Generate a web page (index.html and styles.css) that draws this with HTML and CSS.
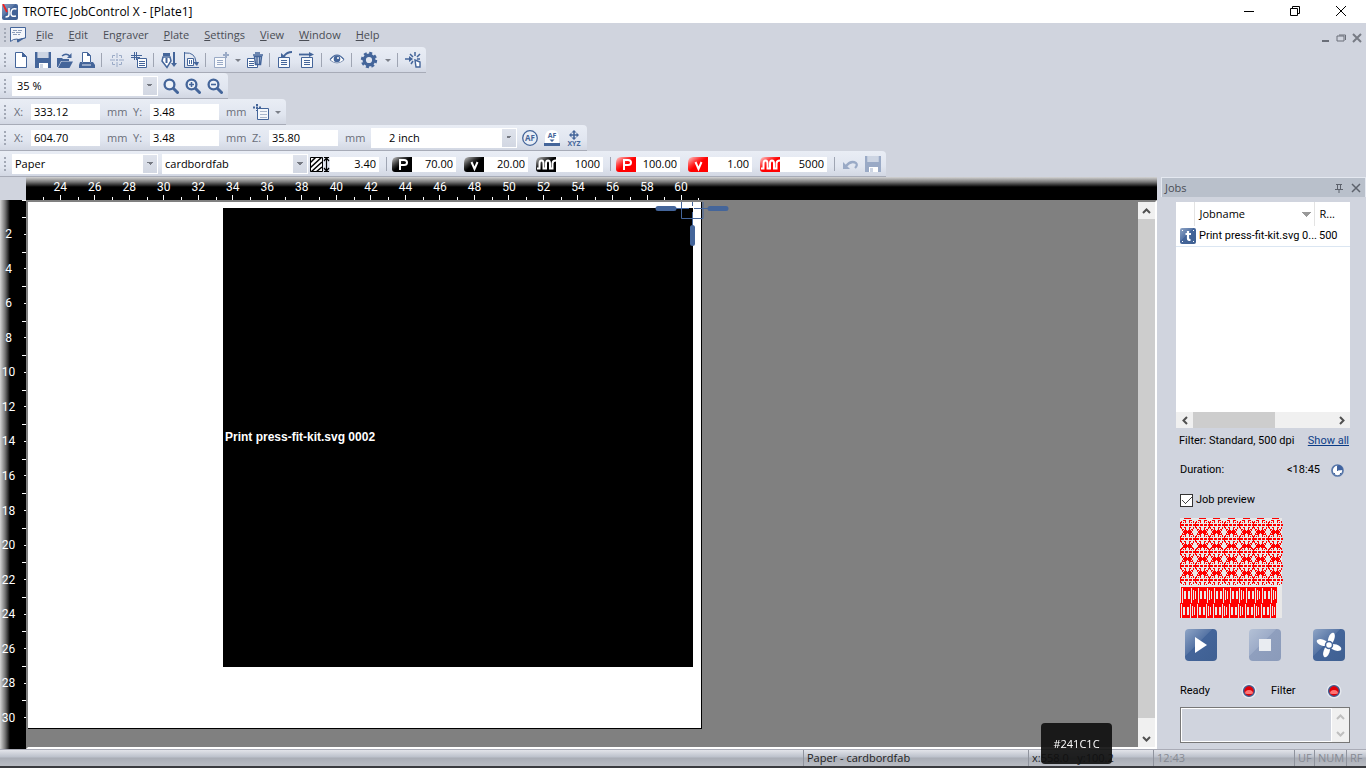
FILE: index.html
```html
<!DOCTYPE html>
<html lang="en">
<head>
<meta charset="utf-8">
<title>TROTEC JobControl X - [Plate1]</title>
<link rel="stylesheet" href="styles.css">
</head>
<body>
<svg class="defs" width="0" height="0" aria-hidden="true">
  <defs>
    <linearGradient id="blue" x1="0" y1="0" x2="1" y2="1"><stop offset="0" stop-color="#8fa5c6"/><stop offset=".42" stop-color="#5775a5"/><stop offset=".43" stop-color="#44659a"/><stop offset="1" stop-color="#3f6092"/></linearGradient>
    <linearGradient id="pale" x1="0" y1="0" x2="1" y2="1"><stop offset="0" stop-color="#b4c1d6"/><stop offset=".42" stop-color="#9dacc8"/><stop offset=".43" stop-color="#8f9fbe"/><stop offset="1" stop-color="#8b9bba"/></linearGradient>
    <linearGradient id="black" x1="0" y1="0" x2="1" y2="1"><stop offset="0" stop-color="#c8c8c8"/><stop offset=".35" stop-color="#303030"/><stop offset=".5" stop-color="#000"/></linearGradient>
    <linearGradient id="red" x1="0" y1="0" x2="1" y2="1"><stop offset="0" stop-color="#ffd0d0"/><stop offset=".35" stop-color="#ff3030"/><stop offset=".5" stop-color="#f00"/></linearGradient>
    <symbol id="save" viewBox="0 0 16 16"><path fill="currentColor" d="M0 0h2.500v6h11V0H16v16H0z"/><path fill="#cdd5e3" d="M3 0h10v6H3z"/><path fill="#fff" d="M4 11h9v5H4z"/><path fill="#cdd5e3" d="M5 12h3v4H5z"/></symbol>
    <symbol id="sheet" viewBox="0 0 16 16"><path fill="#f7f9fc" stroke="currentColor" d="M1.500 5.500h11v10h-11z"/><path stroke="currentColor" d="M4 8.500h6M4 10.500h6M4 12.500h6"/></symbol>
    <symbol id="lens" viewBox="0 0 16 16"><circle cx="6.500" cy="6.500" r="4.900" fill="#eef2f8" stroke="currentColor" stroke-width="2.300"/><path d="M10.500 10.500l4 4" stroke="currentColor" stroke-width="3" stroke-linecap="round"/></symbol>
    <symbol id="wave" viewBox="0 0 20 15"><path fill="none" stroke="#fff" stroke-width="2" d="M1 11.500h2.500v-5q0-3 2-3t2 3v5H10v-5q0-3 2-3t2 3v5h2.500v-5q0-3 3.500-3"/></symbol>
    <symbol id="badge" viewBox="0 0 20 15"><path fill="inherit" d="M5 0h15v15H3q-3 0-3-3V6q0-6 5-6z"/></symbol>
    <symbol id="lamp" viewBox="0 0 16 16"><circle cx="8" cy="8" r="7.500" fill="#e5e8ee"/><circle cx="8" cy="8" r="5.400" fill="#e00008" stroke="#3e5e94" stroke-width="1.400"/><path d="M4 10.500q0-3.500 4-3.500t4 3.500q-4 1.200-8 0z" fill="#ff7474"/></symbol>
    <g id="hexline" fill="#f00" shape-rendering="crispEdges"><path d="M0 6h4v2H0zM5 6h3v2H5zM9 6h3v2H9zM13 6h2v2h-2zM0 4h1v6H0z"/><path d="M3 2h3v1H3zM9 2h3v1H9zM5 3h1v2H5zM9 3h1v2H9zM3 4h1v1H3zM11 4h1v1h-1zM4 9h2v1H4zM9 9h2v1H9zM5 10h1v2H5zM9 10h1v2H9zM3 11h1v1H3zM11 11h1v1h-1zM1 3h1v2H1zM13 3h1v2h-1zM1 9h1v2H1zM13 9h1v2h-1z"/></g>
    <g id="hexnode" fill="#f00" shape-rendering="crispEdges"><path d="M3-1h9v2H3zM4-2h3v4H4zM8-2h3v4H8zM2-3h1v2H2zM12-3h1v2h-1zM2 1h1v2H2zM12 1h1v2h-1z"/></g>
    <g id="linerow"><use href="#hexline"/><use href="#hexline" x="15"/><use href="#hexline" x="29"/><use href="#hexline" x="44"/><use href="#hexline" x="59"/><use href="#hexline" x="73"/><use href="#hexline" x="88"/></g>
    <g id="noderow"><use href="#hexnode"/><use href="#hexnode" x="15"/><use href="#hexnode" x="29"/><use href="#hexnode" x="44"/><use href="#hexnode" x="59"/><use href="#hexnode" x="73"/><use href="#hexnode" x="88"/></g>
    <pattern id="bars" width="16" height="16" patternUnits="userSpaceOnUse">
      <path fill="#f00" d="M0 0h16v16H0z"/>
      <path fill="#e8e8e8" d="M1 1h1v15H1zM3 4h2v8H3zM7 4h2v8H7zM10 1h1v15h-1zM12 3h1v10h-1zM14 4h1v8h-1z"/>
    </pattern>
  </defs>
</svg>

<header class="titlebar">
  <svg class="logo" viewBox="0 0 16 16" width="16" height="16"><rect width="16" height="16" rx="2" fill="url(#blue)"/><path d="M7 4v6.500q0 2.500-3.500 2.500M14.500 5q-5-1.500-5.500 3.500t5 3.500" fill="none" stroke="#fff" stroke-width="1.500"/><path d="M1 0l4 8" stroke="#f02020" stroke-width="1.800"/></svg>
  <h1>TROTEC JobControl X - [Plate1]</h1>
  <div class="winbuttons">
    <button aria-label="Minimize"><svg width="12" height="12" viewBox="0 0 12 12"><path d="M1 6.500h10" stroke="#000"/></svg></button>
    <button aria-label="Restore"><svg width="12" height="12" viewBox="0 0 12 12"><path d="M1.500 3.500h7v7h-7zM3.500 3V1.500h7v7H9" fill="none" stroke="#000"/></svg></button>
    <button aria-label="Close"><svg width="12" height="12" viewBox="0 0 12 12"><path d="M1 1l10 10M11 1L1 11" stroke="#000"/></svg></button>
  </div>
</header>

<nav class="menubar" aria-label="Menu">
  <i class="grip"></i>
  <svg class="doc" viewBox="0 0 16 16" width="16" height="16"><path fill="#f4f6fa" stroke="#44659a" d="M.5.500h15V11l-4.500 1-3.500 3v-3l-4 .5-3 2z"/><path d="M8 15.500V12l7.500-1.500z" fill="#44659a"/><path d="M3 3.500h4M8 3.500h4M2 5.500h3M6 5.500h5M3 7.500h4M8 7.500h2" stroke="#8c9dba"/></svg>
  <button><u>F</u>ile</button><button><u>E</u>dit</button><button>En<u>g</u>raver</button><button><u>P</u>late</button><button><u>S</u>ettings</button><button><u>V</u>iew</button><button><u>W</u>indow</button><button><u>H</u>elp</button>
  <div class="mdibuttons">
    <button aria-label="Minimize plate"><svg width="10" height="10" viewBox="0 0 10 10"><path d="M2 8h7" stroke="#6a6e78" stroke-width="2"/></svg></button>
    <button aria-label="Restore plate"><svg width="10" height="10" viewBox="0 0 10 10"><path d="M1 3h7v5H1zM3 2h6.500v5" fill="none" stroke="#6a6e78"/></svg></button>
    <button aria-label="Close plate"><svg width="10" height="10" viewBox="0 0 10 10"><path d="M1 1l8 8M9 1L1 9" stroke="#777b84" stroke-width="2"/></svg></button>
  </div>
</nav>

<section class="toolbars">
  <div class="toolbar" role="toolbar" aria-label="Standard">
    <i class="grip"></i>
    <button class="tool" aria-label="New"><svg viewBox="0 0 16 16"><path fill="#fff" stroke="currentColor" d="M2.500.5h7l4 4v11h-11z"/><path d="M9 0v5h5z" fill="currentColor"/></svg></button>
    <button class="tool" aria-label="Save"><svg><use href="#save"/></svg></button>
    <button class="tool" aria-label="Open"><svg viewBox="0 0 16 16"><path fill="currentColor" d="M0 6h5l1 1h6v2H4l-3 6H0z"/><path fill="currentColor" d="M4.500 9.500H16L12.500 16H1z"/><path d="M5 4q4-3.500 8 0" fill="none" stroke="currentColor" stroke-width="1.500"/><path d="M14.500 1v5H10z" fill="currentColor"/></svg></button>
    <button class="tool" aria-label="Print"><svg viewBox="0 0 16 16"><path fill="#fff" stroke="currentColor" d="M3.500.5h5l3 3v7h-8z"/><path fill="currentColor" d="M8 0v4h4zM1 10h2v1h9v-1h2l2 3v3H0v-3z"/><path stroke="#e6ebf4" d="M3 13h9"/></svg></button>
    <i class="sep"></i>
    <button class="tool faded" aria-label="Position"><svg viewBox="0 0 16 16"><path fill="none" stroke="currentColor" d="M3.500 6V3.500H6M10 3.500h2.500V6M12.500 10v2.500H10M6 12.500H3.500V10M8 1v5M8 10v5M1 8h5M10 8h5M7 8h2M8 7v2"/></svg></button>
    <button class="tool" aria-label="Position job"><svg viewBox="0 0 16 16"><path stroke="currentColor" d="M3.500 0v8M5.500 0v8M0 3.500h11M0 5.500h9"/><path fill="#fff" stroke="currentColor" d="M6.500 6.500h9v9h-9z"/><path stroke="currentColor" d="M8 9.500h6M8 11.500h6M8 13.500h6"/></svg></button>
    <i class="sep"></i>
    <button class="tool" aria-label="Vector order"><svg viewBox="0 0 16 16"><path fill="currentColor" d="M2 1h7v3H2z"/><path fill="#fff" stroke="currentColor" stroke-width="1.500" d="M2 5h7l1 4-4 6.500L1 9z"/><path d="M5.500 6v5" stroke="currentColor" stroke-width="2"/><path d="M13 0v12" stroke="currentColor" stroke-width="2"/><path d="M10 11h6l-3 4z" fill="currentColor"/></svg></button>
    <button class="tool" aria-label="Rotate"><svg viewBox="0 0 16 16"><path fill="none" stroke="currentColor" d="M1.500 0v15.500H16M2 1q10-1 11 9"/><path fill="#fff" stroke="currentColor" d="M4.500 6.500h6v7h-6z"/><path d="M6.500 8v4M8.500 8v4" stroke="currentColor"/><path d="M10 10h6l-2 4z" fill="currentColor"/></svg></button>
    <i class="sep"></i>
    <button class="tool faded" aria-label="Add job"><svg viewBox="0 0 16 16"><use href="#sheet" width="16" height="16"/><path d="M13 0v6M10 3h6" stroke="currentColor" stroke-width="2"/></svg></button>
    <button class="drop" aria-label="Add options"></button>
    <button class="tool" aria-label="Delete job"><svg viewBox="0 0 16 16"><path fill="#fff" stroke="currentColor" d="M.5 6.500h10v9H.5z"/><path d="M2 9.500h5M2 11.500h5M2 13.500h5" stroke="currentColor"/><path fill="#e6ebf4" stroke="currentColor" stroke-width="1.500" d="M7.500 4.500h7l-1 8h-5z"/><path d="M6 3h10M8 1h5M10 5v7M12.500 5v7" stroke="currentColor" stroke-width="1.500"/></svg></button>
    <i class="sep"></i>
    <button class="tool" aria-label="Undo"><svg viewBox="0 0 16 16"><use href="#sheet" width="16" height="16"/><path d="M15 0q-5 0-8 4" fill="none" stroke="currentColor" stroke-width="1.800"/><path d="M4 1v5h6z" fill="currentColor"/></svg></button>
    <button class="tool" aria-label="Move job"><svg viewBox="0 0 16 16"><use href="#sheet" x="1" width="16" height="16"/><path d="M0 2.500h12" stroke="currentColor" stroke-width="1.800"/><path d="M10 0l5 2.500L10 5z" fill="currentColor"/></svg></button>
    <i class="sep"></i>
    <button class="tool" aria-label="Preview"><svg viewBox="0 0 16 16"><path d="M1 8q7-9 14 0-7 6-14 0z" fill="#fff" stroke="#8799b8"/><path d="M1 7.500q7-9 14 0" fill="none" stroke="currentColor" stroke-width="1.200"/><circle cx="8" cy="7" r="3.300" fill="currentColor"/><circle cx="9" cy="6" r="1" fill="#fff"/></svg></button>
    <i class="sep"></i>
    <button class="tool gear" aria-label="Options"><svg viewBox="0 0 16 16"><circle cx="8" cy="8" r="4.800" fill="none" stroke="currentColor" stroke-width="3.400"/><circle cx="8" cy="8" r="7" fill="none" stroke="currentColor" stroke-width="2.400" stroke-dasharray="3 2.500"/></svg></button>
    <button class="drop" aria-label="Option list"></button>
    <i class="sep"></i>
    <button class="tool" aria-label="Connect laser"><svg viewBox="0 0 16 16"><path d="M0 7h6M10 0v4M5 2l3 3M15 2l-3 3M15 7h-3M6 12l2-3" stroke="currentColor" stroke-width="1.500"/><path d="M4 4l4 3-4 3z" fill="currentColor"/><path d="M10 8l5 2v5h-4z" fill="#fff" stroke="currentColor" stroke-width="1.400"/></svg></button>
  </div>

  <div class="toolbar" role="toolbar" aria-label="Zoom">
    <i class="grip"></i>
    <select class="combo" aria-label="Zoom level"><option>35 %</option></select>
    <button class="tool first" aria-label="Zoom"><svg><use href="#lens"/></svg></button>
    <button class="tool" aria-label="Zoom in"><svg viewBox="0 0 16 16"><use href="#lens" width="16" height="16"/><path d="M4 6.500h5M6.500 4v5" stroke="currentColor" stroke-width="1.600"/></svg></button>
    <button class="tool" aria-label="Zoom out"><svg viewBox="0 0 16 16"><use href="#lens" width="16" height="16"/><path d="M4 6.500h5" stroke="currentColor" stroke-width="1.600"/></svg></button>
  </div>

  <div class="toolbar" role="toolbar" aria-label="Job position">
    <i class="grip"></i>
    <label class="axis"><span>X:</span><input value="333.12"><span>mm</span></label>
    <label class="axis"><span>Y:</span><input value="3.48"><span>mm</span></label>
    <button class="tool" aria-label="Anchor"><svg viewBox="0 0 16 16"><path fill="#f4f7fb" stroke="currentColor" d="M4.500 4.500h11v11h-11z"/><path d="M7 7.500h7M7 10.500h7M7 13.500h7" stroke="#a9b6cc"/><path d="M4 0v7M0 3.500h8" stroke="currentColor" stroke-width="2" stroke-dasharray="2 1"/></svg></button>
    <button class="drop" aria-label="Anchor list"></button>
  </div>

  <div class="toolbar" role="toolbar" aria-label="Laser position">
    <i class="grip"></i>
    <label class="axis"><span>X:</span><input value="604.70"><span>mm</span></label>
    <label class="axis"><span>Y:</span><input value="3.48"><span>mm</span></label>
    <label class="axis"><span>Z:</span><input value="35.80"><span>mm</span></label>
    <select class="combo lenscombo" aria-label="Lens"><option>2 inch</option></select>
    <button class="tool first" aria-label="Autofocus"><svg viewBox="0 0 16 16"><circle cx="8" cy="8" r="7.300" fill="#e9eef6" stroke="currentColor" stroke-width="1.300"/><text x="8" y="11" class="af">AF</text></svg></button>
    <button class="tool" aria-label="Focus table"><svg viewBox="0 0 16 16"><path d="M1 13V6q1-6 7-6t7 6v7z" fill="#fff"/><text x="8" y="8" class="af small">AF</text><path d="M5.500 9.500h5L8 12zM0 13h16v3H0z" fill="currentColor"/></svg></button>
    <button class="tool" aria-label="Move axes"><svg viewBox="0 0 16 16"><path d="M8 1v8M4 5h8" stroke="currentColor" stroke-width="1.600"/><path d="M8 0l2.500 2.500h-5zM8 10L5.500 7.500h5zM3 5l2.500-2.500v5zM13 5l-2.500-2.500v5z" fill="currentColor"/><text x="8" y="16" class="af small">XYZ</text></svg></button>
  </div>

  <div class="toolbar" role="toolbar" aria-label="Material">
    <i class="grip"></i>
    <select class="combo material" aria-label="Material group"><option>Paper</option></select>
    <select class="combo material" aria-label="Material"><option>cardbordfab</option></select>
    <label class="param"><svg viewBox="0 0 20 15" aria-label="Thickness"><path fill="#fff" stroke="#000" d="M.5.5h12v14H.5z"/><path d="M0 6l6-6M0 11L12 0M1 15L12 5M6 15l6-5" stroke="#000" stroke-width="1.500"/><path d="M14 .5h5M14 14.500h5M16.500 1v13M14 4l2.500-3L19 4M14 11l2.500 3 2.500-3" fill="none" stroke="#000" stroke-width="1.200"/></svg><input class="wide" value="3.40"></label>
    <i class="sep wide"></i>
    <label class="param"><svg viewBox="0 0 20 15" aria-label="Engrave power"><use href="#badge" fill="url(#black)"/><path d="M8 13V3h4q3 0 3 2.500T12 8H8" fill="none" stroke="#fff" stroke-width="2"/></svg><input value="70.00"></label>
    <label class="param"><svg viewBox="0 0 20 15" aria-label="Engrave speed"><use href="#badge" fill="url(#black)"/><path d="M7.500 5l3 7 3-7" fill="none" stroke="#fff" stroke-width="2"/></svg><input value="20.00"></label>
    <label class="param"><svg viewBox="0 0 20 15" aria-label="Engrave frequency"><use href="#badge" fill="url(#black)"/><use href="#wave"/></svg><input class="mid" value="1000"></label>
    <i class="sep wide"></i>
    <label class="param"><svg viewBox="0 0 20 15" aria-label="Cut power"><use href="#badge" fill="url(#red)"/><path d="M8 13V3h4q3 0 3 2.500T12 8H8" fill="none" stroke="#fff" stroke-width="2"/></svg><input value="100.00"></label>
    <label class="param"><svg viewBox="0 0 20 15" aria-label="Cut speed"><use href="#badge" fill="url(#red)"/><path d="M7.500 5l3 7 3-7" fill="none" stroke="#fff" stroke-width="2"/></svg><input value="1.00"></label>
    <label class="param"><svg viewBox="0 0 20 15" aria-label="Cut frequency"><use href="#badge" fill="url(#red)"/><use href="#wave"/></svg><input class="mid" value="5000"></label>
    <i class="sep wide"></i>
    <button class="tool faded" aria-label="Revert"><svg viewBox="0 0 16 16"><path d="M3 10q5-6 10-3 2 2-1 5" fill="none" stroke="currentColor" stroke-width="2.200"/><path d="M0 6v7h7z" fill="currentColor"/></svg></button>
    <button class="tool faded" aria-label="Save material"><svg><use href="#save"/></svg></button>
  </div>
</section>

<main class="work">
  <section class="plateview">
    <div class="hruler">
      <span>24</span><span>26</span><span>28</span><span>30</span><span>32</span><span>34</span><span>36</span><span>38</span><span>40</span><span>42</span><span>44</span><span>46</span><span>48</span><span>50</span><span>52</span><span>54</span><span>56</span><span>58</span><span>60</span>
    </div>
    <div class="vruler">
      <span>2</span><span>4</span><span>6</span><span>8</span><span>10</span><span>12</span><span>14</span><span>16</span><span>18</span><span>20</span><span>22</span><span>24</span><span>26</span><span>28</span><span>30</span>
    </div>
    <div class="canvas">
      <div class="surface">
        <div class="plate"><div class="job">Print press-fit-kit.svg 0002</div></div>
        <svg class="laserhead" width="76" height="46" viewBox="0 0 76 46"><g fill="none" stroke="#44659a"><path d="M26.500 0v16.500h21.500V0M37.500 0v4M21 6.500h13M39 6.500h14M37.500 10v13"/><path stroke-width="5" stroke-linecap="round" d="M3 6.500h16M55 6.500h16M37.500 25.500v16"/></g></svg>
      </div>
      <div class="vscroll">
        <button aria-label="Scroll up"><svg width="9" height="6" viewBox="0 0 9 6"><path d="M1 5l3.500-3.500L8 5" fill="none" stroke="#505050" stroke-width="2"/></svg></button>
        <i class="thumb"></i>
        <button aria-label="Scroll down"><svg width="9" height="6" viewBox="0 0 9 6"><path d="M1 1l3.500 3.500L8 1" fill="none" stroke="#505050" stroke-width="2"/></svg></button>
      </div>
    </div>
  </section>

  <aside class="jobs">
    <header><h2>Jobs</h2>
      <button aria-label="Pin"><svg width="10" height="10" viewBox="0 0 10 10"><path d="M2 1.500h6M3.500 1.500v5M6.500 1.500v5M1 6.500h8M5 7v3" fill="none" stroke="#5d626c"/></svg></button>
      <button aria-label="Close jobs"><svg width="10" height="10" viewBox="0 0 10 10"><path d="M1 1l8 8M9 1L1 9" stroke="#5d626c" stroke-width="1.500"/></svg></button>
    </header>
    <div class="jobsbody">
      <div class="list">
        <table>
          <thead><tr><th class="c-icon"></th><th class="c-name">Jobname</th><th>R...</th></tr></thead>
          <tbody><tr><td><svg width="16" height="16" viewBox="0 0 16 16"><rect width="16" height="16" rx="2" fill="url(#blue)"/><path d="M8 3v7.500q0 1.500 2.500 1.500M5.500 6H11" fill="none" stroke="#fff" stroke-width="2.200"/><path d="M2 2h1v1H2zM13 2h1v1h-1zM2 13h1v1H2zM13 13h1v1h-1z" fill="#fff"/></svg></td><td>Print press-fit-kit.svg 0...</td><td>500</td></tr></tbody>
        </table>
        <div class="hscroll">
          <button aria-label="Scroll left"><svg width="6" height="9" viewBox="0 0 6 9"><path d="M5 1L1.500 4.500 5 8" fill="none" stroke="#505050" stroke-width="2"/></svg></button>
          <i class="thumb"></i>
          <button aria-label="Scroll right"><svg width="6" height="9" viewBox="0 0 6 9"><path d="M1 1l3.500 3.500L1 8" fill="none" stroke="#505050" stroke-width="2"/></svg></button>
        </div>
      </div>
      <div class="row filterrow"><span>Filter: Standard, 500 dpi</span><a href="#">Show all</a></div>
      <div class="row duration"><span>Duration:</span><span class="time">&lt;18:45</span><button aria-label="Calculate duration"><svg width="13" height="13" viewBox="0 0 13 13"><circle cx="6.500" cy="6.500" r="5.500" fill="#fff" stroke="#5877a9" stroke-width="1.700"/><path d="M6.500 6.500V1q5 0 5.500 5z" fill="#3f62a0"/><path d="M6 2h1v5H6zM3 9h1v1H3zM9 9h1v1H9z" fill="#44659a"/></svg></button></div>
      <label class="row check"><input type="checkbox" checked>Job preview</label>
      <svg class="preview" width="103" height="100" viewBox="0 0 103 100"><rect width="102" height="100" fill="#e8e8e8"/>
        <path d="M4 .5h7M19 .5h7M33 .5h7M48 .5h7M63 .5h7M77 .5h7M92 .5h7" stroke="#f00" shape-rendering="crispEdges"/>
        <use href="#linerow"/><use href="#linerow" y="14"/><use href="#linerow" y="27"/><use href="#linerow" y="41"/><use href="#linerow" y="55"/>
        <use href="#noderow" y="14"/><use href="#noderow" y="28"/><use href="#noderow" y="41"/><use href="#noderow" y="55"/>
        <g transform="translate(1 69)"><rect width="96" height="16" fill="url(#bars)"/></g><g transform="translate(0 85)"><rect width="96" height="15" fill="url(#bars)"/></g></svg>
      <div class="actions">
        <button aria-label="Start"><svg width="32" height="32" viewBox="0 0 32 32"><rect width="32" height="32" rx="4" fill="url(#blue)"/><path d="M10 8l12 8-12 8z" fill="#fff"/></svg></button>
        <button aria-label="Stop"><svg width="32" height="32" viewBox="0 0 32 32"><rect width="32" height="32" rx="4" fill="url(#pale)"/><path d="M10 10h12v12H10z" fill="#e9ecf1"/></svg></button>
        <button aria-label="Exhaust"><svg width="32" height="32" viewBox="0 0 32 32"><rect width="32" height="32" rx="4" fill="url(#blue)"/><g fill="#fff" transform="rotate(20 16 16)"><ellipse cx="16" cy="9" rx="3" ry="6"/><ellipse cx="16" cy="23" rx="3" ry="6"/><ellipse cx="9" cy="16" rx="6" ry="3"/><ellipse cx="23" cy="16" rx="6" ry="3"/></g><circle cx="16" cy="16" r="3.500" fill="#fff" stroke="#44659a" stroke-width="1.500"/></svg></button>
      </div>
      <div class="row lamps"><span>Ready</span><svg width="16" height="16"><use href="#lamp"/></svg><span>Filter</span><svg width="16" height="16"><use href="#lamp"/></svg></div>
      <div class="messages"><textarea aria-label="Messages" readonly></textarea>
        <div class="spin"><svg width="9" height="6" viewBox="0 0 9 6"><path d="M1 5l3.500-3.500L8 5" fill="none" stroke="#bfbfbf" stroke-width="2"/></svg><svg width="9" height="6" viewBox="0 0 9 6"><path d="M1 1l3.500 3.500L8 1" fill="none" stroke="#bfbfbf" stroke-width="2"/></svg></div>
      </div>
    </div>
  </aside>
</main>

<footer class="status">
  <span class="s-material">Paper - cardbordfab</span>
  <span class="s-pos">x:558.0 &nbsp; y:100.2</span>
  <span class="s-time dim">12:43</span>
  <span class="s-uf dim">UF</span><span class="s-num dim">NUM</span><span class="s-rf dim">RF</span>
</footer>
<div class="tip" role="tooltip">#241C1C</div>
</body>
</html>
```

FILE: styles.css
```css
* { box-sizing: border-box; }
body {
  margin: 0;
  height: 100vh;
  display: flex;
  flex-direction: column;
  overflow: hidden;
  background: #d0d4de;
  color: #000;
  font: 11px/16px "Open Sans", sans-serif;
}
button, input, select, textarea { font: inherit; color: inherit; margin: 0; padding: 0; border: 0; border-radius: 0; outline: 0; }
button { background: none; }
h1, h2 { margin: 0; font-weight: 400; }
svg { display: block; }
.defs { position: absolute; }

.titlebar { display: flex; align-items: center; height: 23px; padding-left: 2px; background: #fff; }
.titlebar h1 { margin-left: 5px; font-size: 12px; }
.winbuttons { margin-left: auto; display: flex; padding: 0 2px 2px 0; }
.winbuttons button { width: 46px; display: grid; place-items: center; }

.menubar { display: flex; align-items: center; height: 24px; padding-left: 4px; color: #4a4d55; }
.grip { width: 8px; height: 14px; flex: none; background: repeating-linear-gradient(#a2a8b5 0 2px, transparent 2px 4px) no-repeat 0 0 / 2px 14px; }
.doc { margin: 0 10px 0 -2px; }
.menubar > button { margin-right: 15px; }
.mdibuttons { margin-left: auto; display: flex; gap: 6px; padding: 6px 4px 0 0; }

.toolbars { display: flex; flex-direction: column; align-items: flex-start; }
.toolbar {
  display: flex;
  align-items: center;
  height: 26px;
  padding: 1px 2px 0 4px;
  border-bottom: 1px solid #a7abb7;
  border-radius: 0 4px 0 0;
  background: linear-gradient(#e9edf5, #e1e6f0 60%, #d2d7e3);
}
.tool { width: 22px; height: 22px; display: grid; place-items: center; color: #44659a; }
.tool svg { width: 16px; height: 16px; overflow: visible; }
.tool.faded { color: #9aaac6; }
.tool.gear { width: 26px; }
.tool.first { margin-left: 2px; }
.grip + .tool, .axis + .tool { margin-left: -2px; }
.drop { width: 12px; height: 22px; display: grid; place-items: center; }
.drop::before { content: ""; border: 3px solid transparent; border-top-color: #7b7f88; border-bottom: 0; }
.sep { width: 8px; height: 14px; background: linear-gradient(#9fa5b3, #9fa5b3) no-repeat 3px 0 / 1px 14px; }
.sep.wide { width: 13px; background-position: 7px 0; }

.combo {
  appearance: none;
  width: 146px;
  height: 20px;
  padding: 0 20px 0 5px;
  background:
    linear-gradient(45deg, transparent 50%, #757982 50%) no-repeat right 8px top 8px / 3px 3px,
    linear-gradient(-45deg, transparent 50%, #757982 50%) no-repeat right 5px top 8px / 3px 3px,
    linear-gradient(#dfe3ec, #d2d7e2) no-repeat right 1px top 1px / 14px 18px,
    #fff;
}
.combo.material { margin-right: 4px; padding-left: 3px; }
.combo.material + .param { margin-left: -2px; }
.lenscombo { padding-left: 18px; }
.axis { display: flex; align-items: center; color: #6a6e79; }
.axis input { width: 69px; height: 16px; padding-left: 3px; background: #fff; color: #000; margin-right: 7px; }
.axis span:first-child { width: 17px; }
.axis span:last-child { width: 26px; }
.toolbar .grip + .axis { padding-left: 2px; }
.param { display: flex; margin-right: 8px; }
.param svg { width: 20px; height: 15px; }
.param input { width: 44px; height: 15px; padding-right: 3px; text-align: right; background: #fff; }
.param input.mid { width: 47px; }
.param input.wide { width: 49px; }
.param:has(+ .sep) { margin-right: 0; }
.af { font: 700 8px "Open Sans", sans-serif; fill: currentColor; text-anchor: middle; }
.af.small { font-size: 7px; }

.work { flex: 1; min-height: 0; display: flex; }
.plateview {
  flex: 1;
  min-width: 0;
  display: grid;
  grid-template: 23px 1fr / 26px 1fr;
  color: #fff;
  font-family: Roboto, sans-serif;
  font-size: 12px;
}
.hruler {
  grid-column: 2;
  display: flex;
  padding: 3px 0 0 17px;
  background: linear-gradient(#d4d4d4, #777 5px, #000 10px);
}
.hruler span {
  flex: 0 0 auto;
  width: calc(656px / 19);
  text-align: center;
  line-height: 14px;
  background:
    linear-gradient(#fff, #fff) no-repeat 50% 100% / 1px 5px,
    linear-gradient(#fff, #fff) no-repeat 0 100% / 1px 3px;
}
.hruler span:last-child { border-right: 1px solid; border-image: linear-gradient(transparent 17px, #fff 17px) 1; }
.vruler {
  display: flex;
  flex-direction: column;
  padding-top: 17px;
  background:
    linear-gradient(#fff, #fff) no-repeat right top / 4px 1px,
    linear-gradient(90deg, #d4d4d4, #777 5px, #000 10px);
}
.vruler span {
  height: calc(518px / 15);
  display: flex;
  align-items: center;
  justify-content: center;
  padding-right: 9px;
  background:
    linear-gradient(#fff, #fff) no-repeat 100% 50% / 2px 1px,
    linear-gradient(#fff, #fff) no-repeat 100% 0 / 4px 1px;
}
.canvas {
  display: flex;
  min-height: 0;
  border: 2px solid;
  border-color: #808080 #fff #fff #808080;
}
.surface { flex: 1; position: relative; overflow: hidden; background: #808080; }
.plate { position: relative; width: 674px; height: 527px; background: #fff; border: solid #000; border-width: 0 1px 1px 0; }
.job {
  position: absolute;
  left: 195px;
  top: 6px;
  width: 470px;
  height: 459px;
  padding: 0 0 2px 2px;
  display: flex;
  align-items: center;
  background: #000;
  font-family: "Liberation Sans", sans-serif;
  font-weight: 700;
}
.laserhead { position: absolute; left: 627px; top: 0; }
.vscroll { width: 17px; display: flex; flex-direction: column; background: #f0f0f0; }
.vscroll button { height: 17px; display: grid; place-items: center; }
.vscroll .thumb { flex: 1; margin-bottom: 12px; background: #cdcdcd; }

.jobs { width: 205px; margin-left: 4px; display: flex; flex-direction: column; font-family: Roboto, sans-serif; }
.jobs header {
  display: flex;
  align-items: center;
  gap: 7px;
  height: 20px;
  margin-bottom: 5px;
  padding: 0 4px 0 3px;
  background: #b9c0cb;
  border: 1px solid #e4e8f0;
  border-bottom: 0;
}
.jobs h2 { flex: 1; font: 11px "Open Sans", sans-serif; color: #4a4d55; }
.jobsbody { padding: 0 16px 0 15px; display: flex; flex-direction: column; }
.list { height: 226px; background: #fff; display: flex; flex-direction: column; }
table { border-collapse: collapse; table-layout: fixed; width: 100%; }
th, td { padding: 0 0 0 5px; text-align: left; white-space: nowrap; font-weight: 400; }
th { height: 24px; border-right: 1px solid #e3e3e3; font-family: "Open Sans", sans-serif; }
th:last-child { border-right: 0; }
td { height: 20px; border-bottom: 1px solid #dbe6f2; }
td:first-child { padding-left: 4px; }
.c-icon { width: 18px; }
.c-name {
  width: 120px;
  background:
    linear-gradient(45deg, transparent 50%, #999 50%) no-repeat right 7px top 10px / 5px 5px,
    linear-gradient(-45deg, transparent 50%, #999 50%) no-repeat right 2px top 10px / 5px 5px;
}
.hscroll { margin-top: auto; height: 16px; display: flex; background: #f0f0f0; }
.hscroll button { width: 17px; display: grid; place-items: center; }
.hscroll .thumb { width: 82px; margin-right: auto; background: #cdcdcd; }
.row { display: flex; align-items: center; padding: 0 0 0 4px; height: 16px; }
.filterrow { margin-top: 5px; padding: 0 1px 0 3px; justify-content: space-between; }
.filterrow a { color: #0b3c86; }
.duration { margin-top: 13px; padding-right: 6px; }
.time { margin-left: auto; margin-right: 11px; }
.check { margin-top: 14px; gap: 3px; }
.check input {
  appearance: none;
  width: 13px;
  height: 13px;
  border: 1px solid #333;
  background:
    linear-gradient(45deg, transparent 40%, #444 40% 60%, transparent 60%) no-repeat 1px 5px / 4px 4px,
    linear-gradient(-45deg, transparent 44%, #444 44% 56%, transparent 56%) no-repeat 4px 2px / 7px 7px,
    #fff;
}
.preview { margin: 10px 0 0 4px; }
.actions { display: flex; justify-content: space-between; margin-top: 11px; padding: 0 5px 0 9px; }
.lamps { margin-top: 22px; }
.lamps span { width: 61px; }
.lamps span + svg { margin-right: 14px; }
.lamps span:nth-of-type(2) { width: 55px; }
.lamps svg:last-child { margin-right: 0; }
.messages { display: flex; height: 36px; margin: 8px 0 0 4px; border: 1px solid #777; }
.messages textarea { flex: 1; min-width: 0; resize: none; background: #d0d4de; border: 1px solid #fff; }
.spin { width: 17px; display: flex; flex-direction: column; justify-content: space-around; align-items: center; background: #f0f0f0; }

.status {
  display: flex;
  height: 19px;
  flex: none;
  justify-content: flex-end;
  border-top: 1px solid #a9abb6;
  border-bottom: 2px solid #3a3b3f;
  background: linear-gradient(#e2e4ea, #bcc1cb 7px, #a9adb6 8px, #b9bcc3);
  color: #222;
}
.status span { padding-left: 3px; border-left: 1px solid #8f939d; white-space: nowrap; }
.status .dim { color: #868a93; }
.s-material { width: 225px; }
.s-pos { width: 125px; }
.s-time { width: 141px; }
.s-uf { width: 20px; }
.s-num { width: 32px; }
.s-rf { width: 20px; }
.tip {
  position: fixed;
  right: 254px;
  bottom: 4px;
  width: 71px;
  height: 41px;
  border-radius: 4px;
  background: rgb(16 16 16 / 92%);
  color: #fff;
  line-height: 41px;
  text-align: center;
}
```
